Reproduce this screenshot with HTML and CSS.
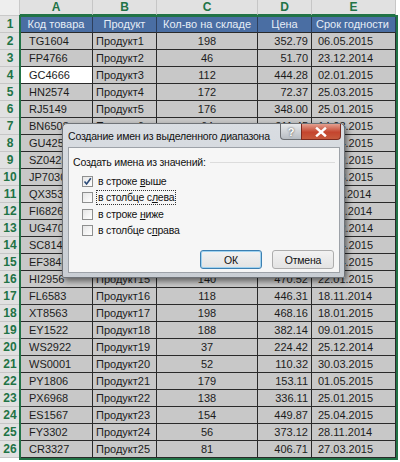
FILE: index.html
```html
<!DOCTYPE html>
<html>
<head>
<meta charset="utf-8">
<link rel="stylesheet" href="styles.css">
</head>
<body>
<div class="sheet">
  <div class="grid">
    <div class="corner"></div>
    <div class="ch">A</div><div class="ch">B</div><div class="ch">C</div><div class="ch">D</div><div class="ch">E</div>

    <div class="rh">1</div><div class="c hd">Код товара</div><div class="c hd">Продукт</div><div class="c hd">Кол-во на складе</div><div class="c hd">Цена</div><div class="c hd hde">Срок годности</div>
    <div class="rh">2</div><div class="c ca">TG1604</div><div class="c cb">Продукт1</div><div class="c cc">198</div><div class="c cd">352.79</div><div class="c ce">06.05.2015</div>
    <div class="rh">3</div><div class="c ca">FP4766</div><div class="c cb">Продукт2</div><div class="c cc">46</div><div class="c cd">51.70</div><div class="c ce">23.12.2014</div>
    <div class="rh">4</div><div class="c ca active">GC4666</div><div class="c cb">Продукт3</div><div class="c cc">112</div><div class="c cd">444.28</div><div class="c ce">02.01.2015</div>
    <div class="rh">5</div><div class="c ca">HN2574</div><div class="c cb">Продукт4</div><div class="c cc">172</div><div class="c cd">72.37</div><div class="c ce">25.03.2015</div>
    <div class="rh">6</div><div class="c ca">RJ5149</div><div class="c cb">Продукт5</div><div class="c cc">176</div><div class="c cd">348.00</div><div class="c ce">25.01.2015</div>
    <div class="rh">7</div><div class="c ca">BN6508</div><div class="c cb">Продукт6</div><div class="c cc">64</div><div class="c cd">211.45</div><div class="c ce">14.03.2015</div>
    <div class="rh">8</div><div class="c ca">GU4251</div><div class="c cb">Продукт7</div><div class="c cc">83</div><div class="c cd">190.12</div><div class="c ce">04.04.2015</div>
    <div class="rh">9</div><div class="c ca">SZ0423</div><div class="c cb">Продукт8</div><div class="c cc">121</div><div class="c cd">95.60</div><div class="c ce">12.02.2015</div>
    <div class="rh">10</div><div class="c ca">JP7030</div><div class="c cb">Продукт9</div><div class="c cc">150</div><div class="c cd">301.84</div><div class="c ce">03.03.2015</div>
    <div class="rh">11</div><div class="c ca">QX3531</div><div class="c cb">Продукт10</div><div class="c cc">27</div><div class="c cd">120.05</div><div class="c ce">11.11.2014</div>
    <div class="rh">12</div><div class="c ca">FI6826</div><div class="c cb">Продукт11</div><div class="c cc">93</div><div class="c cd">264.30</div><div class="c ce">21.11.2014</div>
    <div class="rh">13</div><div class="c ca">UG4701</div><div class="c cb">Продукт12</div><div class="c cc">165</div><div class="c cd">407.19</div><div class="c ce">12.12.2014</div>
    <div class="rh">14</div><div class="c ca">SC8146</div><div class="c cb">Продукт13</div><div class="c cc">71</div><div class="c cd">58.90</div><div class="c ce">24.04.2015</div>
    <div class="rh">15</div><div class="c ca">EF3848</div><div class="c cb">Продукт14</div><div class="c cc">102</div><div class="c cd">233.67</div><div class="c ce">14.04.2015</div>
    <div class="rh">16</div><div class="c ca">HI2956</div><div class="c cb">Продукт15</div><div class="c cc">140</div><div class="c cd">470.52</div><div class="c ce">22.01.2015</div>
    <div class="rh">17</div><div class="c ca">FL6583</div><div class="c cb">Продукт16</div><div class="c cc">118</div><div class="c cd">446.31</div><div class="c ce">18.11.2014</div>
    <div class="rh">18</div><div class="c ca">XT8563</div><div class="c cb">Продукт17</div><div class="c cc">198</div><div class="c cd">468.16</div><div class="c ce">18.01.2015</div>
    <div class="rh">19</div><div class="c ca">EY1522</div><div class="c cb">Продукт18</div><div class="c cc">188</div><div class="c cd">382.14</div><div class="c ce">09.01.2015</div>
    <div class="rh">20</div><div class="c ca">WS2922</div><div class="c cb">Продукт19</div><div class="c cc">37</div><div class="c cd">224.42</div><div class="c ce">25.12.2014</div>
    <div class="rh">21</div><div class="c ca">WS0001</div><div class="c cb">Продукт20</div><div class="c cc">52</div><div class="c cd">110.32</div><div class="c ce">30.03.2015</div>
    <div class="rh">22</div><div class="c ca">PY1806</div><div class="c cb">Продукт21</div><div class="c cc">179</div><div class="c cd">153.11</div><div class="c ce">01.05.2015</div>
    <div class="rh">23</div><div class="c ca">PX6968</div><div class="c cb">Продукт22</div><div class="c cc">138</div><div class="c cd">336.11</div><div class="c ce">25.01.2015</div>
    <div class="rh">24</div><div class="c ca">ES1567</div><div class="c cb">Продукт23</div><div class="c cc">154</div><div class="c cd">449.87</div><div class="c ce">25.04.2015</div>
    <div class="rh">25</div><div class="c ca">FY3302</div><div class="c cb">Продукт24</div><div class="c cc">56</div><div class="c cd">373.12</div><div class="c ce">28.11.2014</div>
    <div class="rh">26</div><div class="c ca">CR3327</div><div class="c cb">Продукт25</div><div class="c cc">81</div><div class="c cd">406.71</div><div class="c ce">27.03.2015</div>
  </div>
  <div class="selection"></div>

  <div class="dialog">
    <div class="titlebar">
      <span class="title">Создание имен из выделенного диапазона</span>
      <span class="caption-btns">
        <span class="cbtn help">?</span>
        <span class="cbtn close"><svg width="12" height="10" viewBox="0 0 12 10"><path d="M2 1.5 L10 8.5 M10 1.5 L2 8.5" stroke="#fff" stroke-width="2.4" stroke-linecap="square"/></svg></span>
      </span>
    </div>
    <div class="body">
      <div class="group-label"><span>Создать имена из значений:</span><span class="rule"></span></div>
      <div class="opts">
        <div class="opt"><span class="box checked"><svg width="9" height="9" viewBox="0 0 9 9"><path d="M1.5 4.5 L3.6 7 L7.8 1.3" fill="none" stroke="#2b4a78" stroke-width="1.6"/></svg></span><span class="lbl">в строке <u>в</u>ыше</span></div>
        <div class="opt"><span class="box"></span><span class="lbl focus">в столбце с<u>л</u>ева</span></div>
        <div class="opt"><span class="box"></span><span class="lbl">в строке <u>н</u>иже</span></div>
        <div class="opt"><span class="box"></span><span class="lbl">в столбце с<u>п</u>рава</span></div>
      </div>
      <div class="buttons">
        <span class="btn default">ОК</span>
        <span class="btn">Отмена</span>
      </div>
    </div>
  </div>
</div>
</body>
</html>
```

FILE: styles.css
```css
html, body {
  margin: 0;
  padding: 0;
}
body {
  width: 400px;
  height: 462px;
  overflow: hidden;
  background: #ffffff;
  font-family: "Liberation Sans", Arial, sans-serif;
}
.sheet {
  position: relative;
  width: 400px;
  height: 462px;
}
.grid {
  display: grid;
  grid-template-columns: 20px 73px 64px 101px 54px 84px;
  grid-template-rows: 16px repeat(26, 17px);
  width: 396px;
}
.grid > div {
  box-sizing: border-box;
  overflow: hidden;
  white-space: nowrap;
}
.corner {
  background: #eeeeee;
  border-right: 1px solid #c9c9c9;
  border-bottom: 1px solid #c9c9c9;
}
.ch {
  background: #e1e1e1;
  border-right: 1px solid #c6c6c6;
  border-bottom: 2px solid #217346;
  color: #217346;
  font-weight: bold;
  font-size: 12px;
  text-align: center;
  line-height: 15px;
}
.rh {
  background: #e1e1e1;
  border-bottom: 1px solid #c6c6c6;
  color: #217346;
  font-weight: bold;
  font-size: 12px;
  text-align: center;
  line-height: 17px;
}
.c {
  background: #c8c8c8;
  border-right: 1px solid #2a2a2a;
  border-bottom: 1px solid #2a2a2a;
  color: #1c1c1c;
  font-size: 11px;
  line-height: 16px;
}
.c.active {
  background: #ffffff;
}
.hd {
  background: #4a6ea3;
  color: #e6edf6;
  text-align: center;
  border-right-color: #2d3f5c;
}
.hd.hde {
  text-align: left;
  padding-left: 4px;
  overflow: visible;
}
.ca { padding-left: 9px; }
.cb { padding-left: 3px; }
.cc { text-align: center; }
.cd { text-align: right; padding-right: 3px; }
.ce { padding-left: 6px; }

.selection {
  position: absolute;
  left: 19px;
  top: 15px;
  width: 379px;
  height: 445px;
  box-sizing: border-box;
  border: 2px solid #217346;
  pointer-events: none;
}

/* dialog */
.dialog {
  position: absolute;
  left: 62px;
  top: 123px;
  width: 283px;
  height: 155px;
  box-sizing: border-box;
  background: linear-gradient(#d9dde2, #c9ced4);
  border: 1px solid #6f7378;
  border-radius: 5px 5px 2px 2px;
  box-shadow: 2px 3px 6px rgba(0, 0, 0, 0.55);
  display: flex;
  flex-direction: column;
  font-size: 10.5px;
  letter-spacing: -0.2px;
  color: #111;
}
.titlebar {
  height: 23px;
  display: flex;
  align-items: flex-start;
  justify-content: space-between;
  padding-left: 5px;
}
.title {
  line-height: 25px;
  white-space: nowrap;
}
.caption-btns {
  display: flex;
  margin-right: 3px;
}
.cbtn {
  height: 16px;
  box-sizing: border-box;
  display: flex;
  align-items: center;
  justify-content: center;
  border: 1px solid #6c6f73;
  border-top: none;
  letter-spacing: 0;
}
.help {
  width: 21px;
  border-radius: 0 0 0 4px;
  background: linear-gradient(#e8eaec, #b7bcc2);
  color: #fff;
  font-weight: bold;
  font-size: 11px;
  text-shadow: 0 0 2px #333;
  border-right: none;
}
.close {
  width: 40px;
  border-radius: 0 0 4px 0;
  background: linear-gradient(#e4a090, #c4452e 55%, #c75a3d);
  border-color: #7d2a1e;
}
.body {
  margin: 0 4px 4px 5px;
  flex: 1;
  background: #f6f6f6;
  border: 1px solid #9da2a8;
  padding: 6px 4px 0 4px;
  display: flex;
  flex-direction: column;
}
.group-label {
  display: flex;
  align-items: center;
  line-height: 16px;
  gap: 4px;
}
.rule {
  flex: 1;
  height: 1px;
  background: #dcdcdc;
}
.opts {
  margin-top: 3px;
  padding-left: 9px;
  display: flex;
  flex-direction: column;
}
.opt {
  height: 16.5px;
  display: flex;
  align-items: center;
}
.box {
  width: 11px;
  height: 11px;
  box-sizing: border-box;
  border: 1px solid #8e8f8f;
  background: linear-gradient(135deg, #e6e6e6, #ffffff);
  display: flex;
  align-items: center;
  justify-content: center;
  margin-right: 3px;
}
.lbl {
  padding: 0 1px;
  line-height: 13px;
  border: 1px solid transparent;
}
.lbl.focus {
  border: 1px dotted #333;
}
.buttons {
  margin-top: 11px;
  display: flex;
  justify-content: flex-end;
  gap: 10px;
  padding-right: 1px;
}
.btn {
  width: 62px;
  height: 19px;
  box-sizing: border-box;
  border: 1px solid #adadad;
  border-radius: 3px;
  background: linear-gradient(#f2f2f2, #e3e3e3);
  display: flex;
  align-items: center;
  justify-content: center;
}
.btn.default {
  border-color: #3c7fb1;
  box-shadow: inset 0 0 0 1px #9fd2f0;
}
```
